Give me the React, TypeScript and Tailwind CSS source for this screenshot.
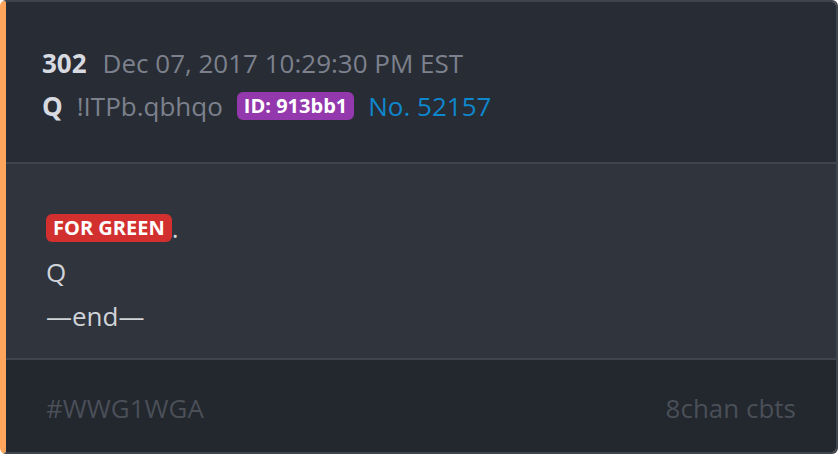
export default function App() {
  return (
    <div className="h-[454px] w-[840px] bg-[#ffffff]" style={{ fontFamily: '"Open Sans", sans-serif' }}>
      <div className="flex h-[454px] w-[838px] flex-col overflow-hidden rounded-[6px] border-2 border-l-[6px] border-[#3f444d] border-l-[#ffa65c]">
        <div className="flex h-[160px] flex-col bg-[#282c34] pl-[36px] pr-[40px] pt-[42px]">
          <div className="flex items-baseline gap-[16px] text-[26px] leading-[38px]">
            <span className="font-bold text-[#d7dae0]">302</span>
            <span className="text-[#7c818d]">Dec 07, 2017 10:29:30 PM EST</span>
          </div>
          <div className="mt-[5px] flex items-center gap-[14px] text-[26px] leading-[38px]">
            <span className="font-bold text-[#d7dae0]">Q</span>
            <span className="text-[#7c818d]">!ITPb.qbhqo</span>
            <span className="rounded-[6px] bg-[#9438ad] px-[7px] text-[20px] font-bold leading-[28px] text-white">ID: 913bb1</span>
            <span className="text-[#0e87cc]">No. 52157</span>
          </div>
        </div>
        <div className="h-[2px] bg-[#3f444d]" />
        <div className="flex h-[194px] flex-col bg-[#2f343d] px-[40px] pt-[42px] text-[26px] leading-[44px] text-[#d0d3d8]">
          <div className="flex items-center">
            <span className="rounded-[6px] bg-[#d2302f] px-[7px] text-[20px] font-bold leading-[28px] text-white">FOR GREEN</span>
            <span>.</span>
          </div>
          <div>Q</div>
          <div>—end—</div>
        </div>
        <div className="h-[2px] bg-[#3f444d]" />
        <div className="flex flex-1 items-center justify-between bg-[#23272e] px-[40px] pt-[4px] text-[26px] text-[#4a4f58]">
          <span>#WWG1WGA</span>
          <span>8chan cbts</span>
        </div>
      </div>
    </div>
  );
}
